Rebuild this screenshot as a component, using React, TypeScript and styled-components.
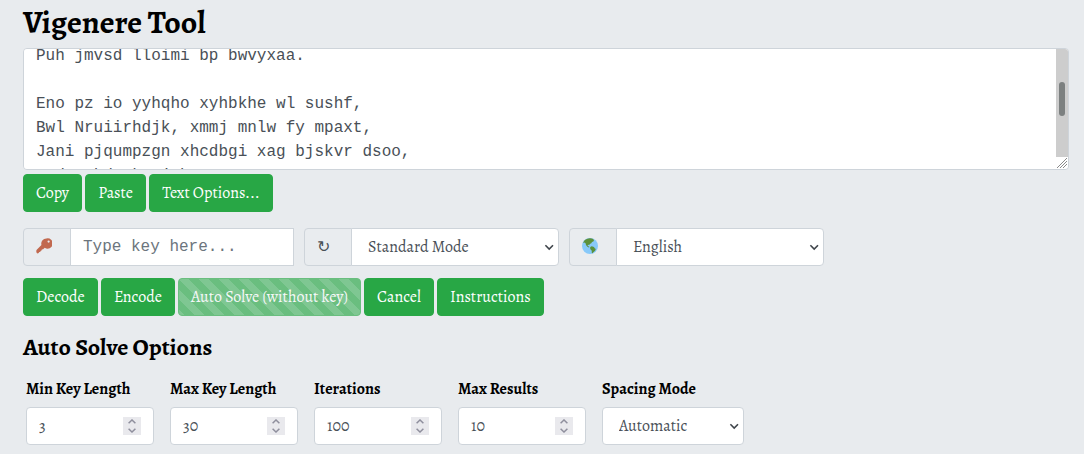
import React, { useLayoutEffect, useRef, useState } from "react";
import styled, { createGlobalStyle, css } from "styled-components";

const serif = `Alegreya, "Liberation Serif", serif`;
const mono = `"Liberation Mono", monospace`;

const MESSAGE = `Mdes mgplmmz, cvs alv lsmtsn aowil
Fqs ncix hrd rxtbmi bp bwl arul;
Elw bpmtc pgzt alv uvvordcet,
Egb bwl qffl vaewz ovxztiql.

'Fvphve ewl Jbfugzlvgb, ff woy!
Ioe kepu bwhx sbai, tst jlbal vppa grmjl!
Bplhrf xag Rjinlu imro, pud tlnp
Bwl jintmofh Iaohxtachxta!

Oi tzdr hjw oqzehp jpvvd tc oaoh:
Eqvv amdx ale xpuxpqx hwt oi jhbkhe--
Hv rfwmgl wl fp moi Tfbaun xkgm,
Puh jmvsd lloimi bp bwvyxaa.

Eno pz io yyhqho xyhbkhe wl sushf,
Bwl Nruiirhdjk, xmmj mnlw fy mpaxt,
Jani pjqumpzgn xhcdbgi xag bjskvr dsoo,
Pud cykdttk ej ba gaxt!

Vnf, xpq! Wcl, xnh! Hrd ewyovka cvs alihbkh
Ewl vpvict qseux dine huidoxt-achgb!
Al peqi pt eitf, ick azmo mtd wlae
Lx ymca krebqpsxug cevm.

'Ick lrla xhj zzbag vpt Qesulvwzrr?
Cpqx vw bf eifz, qy mthmjwa dwn!
V jitinofh kaz! Gtntvl! Ttspaj!'
Wl ciskvttk me apw jzn.

'Awbw utqasmx, tuh tst zljxaa bdcij
Wph gjgl aoh zkuqsi zg ale hpie;
Bpe oqbzc nxyi tst iosszqdtz,
Eew ale xdte semja dbxxkhfe.
Jdbr tivtmi pw sxderpIoeKeudmgdstd`;

const TRACK_HEIGHT = 108;
const THUMB_HEIGHT = 34;

const GlobalStyle = createGlobalStyle`
  *, *::before, *::after { box-sizing: border-box; }
  body {
    margin: 0;
    background: #e8ebee;
    color: #000;
    font: 16px/24px ${serif};
  }
`;

const Page = styled.main`
  padding: 4px 15px 8px 23px;
`;

const Title = styled.h1`
  margin: 0 0 8px;
  font-size: 32px;
  line-height: 36px;
  font-weight: 700;
`;

const Subtitle = styled.h2`
  margin: 16px 0 15px;
  font-size: 24px;
  line-height: 30px;
  font-weight: 700;
`;

const control = css`
  border: 1px solid #ced4da;
  border-radius: 4px;
  background: #fff;
  color: #495057;
  outline: none;
`;

const MessageBox = styled.div`
  position: relative;
  margin-bottom: 4px;
`;

const Message = styled.textarea`
  ${control}
  display: block;
  width: 100%;
  height: 122px;
  padding: 6px 24px 6px 12px;
  font: 16px/24px ${mono};
  overflow-y: scroll;
  resize: none;
  scrollbar-width: none;
`;

const ScrollTrack = styled.div`
  position: absolute;
  top: 1px;
  right: 1px;
  width: 12px;
  height: ${TRACK_HEIGHT}px;
  padding: 0 3px;
  border-radius: 0 3px 0 0;
  background: #cdcdcd;
  pointer-events: none;
`;

const ScrollThumb = styled.div`
  height: ${THUMB_HEIGHT}px;
  border-radius: 3px;
  background: #7c8080;
`;

const Grip = styled.svg`
  position: absolute;
  right: 1px;
  bottom: 1px;
  pointer-events: none;
`;

const ButtonRow = styled.div`
  line-height: 24px;
`;

const Button = styled.button`
  height: 38px;
  padding: 0 12px;
  border: 1px solid #28a745;
  border-radius: 4px;
  background-color: #28a745;
  color: #fff;
  font: 16px/24px ${serif};
  vertical-align: top;
  white-space: nowrap;
  cursor: pointer;

  &:disabled {
    opacity: 0.65;
    cursor: default;
    background-image: linear-gradient(
      45deg,
      rgba(255, 255, 255, 0.15) 25%,
      transparent 25%,
      transparent 50%,
      rgba(255, 255, 255, 0.15) 50%,
      rgba(255, 255, 255, 0.15) 75%,
      transparent 75%,
      transparent
    );
    background-size: 20px 20px;
  }
`;

const GroupRow = styled.div`
  display: flex;
  flex-wrap: wrap;
  gap: 10px;
  margin: 16px 0 12px;
`;

const Group = styled.div<{ $width: number }>`
  display: flex;
  width: ${(p) => p.$width}px;
  height: 38px;
`;

const Addon = styled.label`
  display: flex;
  align-items: center;
  flex: none;
  width: 48px;
  padding-left: 12px;
  border: 1px solid #ced4da;
  border-radius: 4px 0 0 4px;
  background: #e9ecef;
  color: #495057;

  svg { margin-bottom: 2px; }
`;

const KeyInput = styled.input`
  ${control}
  flex: 1;
  min-width: 0;
  border-radius: 0;
  margin-left: -1px;
  padding: 6px 12px;
  font: 16px/24px ${mono};

  &::placeholder { color: #6c757d; opacity: 1; }
`;

const SelectBox = styled.div<{ $joined?: boolean }>`
  position: relative;
  flex: 1;
  min-width: 0;
  margin-left: ${(p) => (p.$joined ? -1 : 0)}px;
`;

const Select = styled.select<{ $joined?: boolean }>`
  ${control}
  appearance: none;
  width: 100%;
  height: 38px;
  padding: 6px 16px;
  font: 16px/24px ${serif};
  ${(p) => p.$joined && css`border-radius: 0 4px 4px 0;`}
`;

const Arrow = styled.svg`
  position: absolute;
  right: 5px;
  top: 15px;
  pointer-events: none;
`;

const Fields = styled.div`
  display: flex;
  flex-wrap: wrap;
  gap: 16px;
  padding-left: 3px;
`;

const Field = styled.div<{ $width: number }>`
  width: ${(p) => p.$width}px;
`;

const FieldLabel = styled.label`
  display: block;
  margin-bottom: 6px;
  font-weight: 700;
  white-space: nowrap;
`;

const NumberBox = styled.div`
  ${control}
  display: flex;
  align-items: center;
  height: 38px;
  padding: 0 12px;
`;

const NumberInput = styled.input`
  flex: 1;
  min-width: 0;
  padding: 0;
  border: 0;
  outline: none;
  background: none;
  color: inherit;
  font: 16px/24px ${serif};
  appearance: textfield;

  &::-webkit-inner-spin-button { appearance: none; margin: 0; }
`;

const Spinner = styled.div`
  display: flex;
  flex-direction: column;
  flex: none;
  width: 18px;
  height: 18px;
  background: #e9e9ed;
`;

const Step = styled.button`
  display: flex;
  align-items: center;
  justify-content: center;
  height: 9px;
  padding: 0;
  border: 0;
  background: none;
  color: #8f8f9d;
`;

function KeyIcon() {
  return (
    <svg width="16" height="16" viewBox="0 0 17 17" aria-hidden="true">
      <path
        fill="#c1694f"
        fillRule="evenodd"
        d="M11 .5a5.500 5.500 0 0 0-5.200 7L.8 12.600c-.5.600-.6 1.300-.4 2.200l.4 1.200c.7.600 1.600.300 2-.100l.7-.9 1-.2.300-1.100 1.100-.3.300-1.200 1.400-.3 1.700-1.500A5.500 5.500 0 1 0 11 .5zm2.400 2.100a1.200 1.200 0 1 1 0 2.400 1.200 1.200 0 0 1 0-2.400z"
      />
    </svg>
  );
}

function GlobeIcon() {
  return (
    <svg width="16" height="16" viewBox="0 0 36 36" aria-hidden="true">
      <circle cx="18" cy="18" r="18" fill="#88c9f9" />
      <path
        fill="#5c913b"
        d="M4.500 6.500C8 2.500 13 .5 18 .3c3 .2 5 1 7 2l2 3-1.500 2.500-3 1-1.500 3-3.500 1.500-1 2.500-3-.5-1 1.500 2 1.500 2.500 2-1.500 1-4-2-2.500-3.500-1-4-2.500-1.800-3 1z"
      />
      <path
        fill="#5c913b"
        d="M18.500 20.500l3.500-2 5 1.500 1.500 3 2.500 1.500-1.500 4-4 3.500-2 2.500-1.500-1v-5l-3.500-3.500z"
      />
    </svg>
  );
}

function Chevron() {
  return (
    <Arrow width="10" height="8" viewBox="0 0 10 8" aria-hidden="true">
      <path d="M1.400 2.200 5.200 6l3.800-3.800" fill="none" stroke="#3f454b" strokeWidth="1.600" />
    </Arrow>
  );
}

function NumberField({ id, label, initial }: { id: string; label: string; initial: number }) {
  const [value, setValue] = useState(initial);
  return (
    <Field $width={128}>
      <FieldLabel htmlFor={id}>{label}</FieldLabel>
      <NumberBox>
        <NumberInput
          id={id}
          type="number"
          value={value}
          onChange={(e) => setValue(Number(e.target.value))}
        />
        <Spinner>
          <Step type="button" tabIndex={-1} aria-label={`Increase ${label}`} onClick={() => setValue(value + 1)}>
            <svg width="8" height="5" viewBox="0 0 8 5">
              <path d="M.6 4.300 4 1l3.400 3.300" fill="none" stroke="currentColor" strokeWidth="1.500" />
            </svg>
          </Step>
          <Step type="button" tabIndex={-1} aria-label={`Decrease ${label}`} onClick={() => setValue(value - 1)}>
            <svg width="8" height="5" viewBox="0 0 8 5">
              <path d="M.6 .7 4 4 7.400 .7" fill="none" stroke="currentColor" strokeWidth="1.500" />
            </svg>
          </Step>
        </Spinner>
      </NumberBox>
    </Field>
  );
}

function MessageArea() {
  const area = useRef<HTMLTextAreaElement>(null);
  const [thumbTop, setThumbTop] = useState(0);

  const syncThumb = () => {
    const el = area.current;
    if (!el) return;
    const range = Math.max(1, el.scrollHeight - el.clientHeight);
    setThumbTop(Math.round((el.scrollTop / range) * (TRACK_HEIGHT - THUMB_HEIGHT)));
  };

  useLayoutEffect(() => {
    if (area.current) area.current.scrollTop = 323;
    syncThumb();
  }, []);

  return (
    <MessageBox>
      <Message ref={area} aria-label="Message" spellCheck={false} defaultValue={MESSAGE} onScroll={syncThumb} />
      <ScrollTrack>
        <ScrollThumb style={{ transform: `translateY(${thumbTop}px)` }} />
      </ScrollTrack>
      <Grip width="12" height="12" viewBox="0 0 12 12" aria-hidden="true">
        <path d="M1 11 11 1M4 11l7-7M7 11l4-4" fill="none" stroke="#8a8a8a" strokeWidth="1" />
      </Grip>
    </MessageBox>
  );
}

export default function App() {
  return (
    <>
      <GlobalStyle />
      <Page>
        <Title>Vigenere Tool</Title>
        <MessageArea />
        <ButtonRow>
          <Button type="button">Copy</Button>{" "}
          <Button type="button">Paste</Button>{" "}
          <Button type="button">Text Options...</Button>
        </ButtonRow>

        <GroupRow>
          <Group $width={271}>
            <Addon htmlFor="key" aria-label="Key"><KeyIcon /></Addon>
            <KeyInput id="key" type="text" placeholder="Type key here..." />
          </Group>
          <Group $width={255}>
            <Addon htmlFor="mode" aria-label="Mode">↻</Addon>
            <SelectBox $joined>
              <Select id="mode" $joined>
                <option>Standard Mode</option>
              </Select>
              <Chevron />
            </SelectBox>
          </Group>
          <Group $width={255}>
            <Addon htmlFor="language" aria-label="Language"><GlobeIcon /></Addon>
            <SelectBox $joined>
              <Select id="language" $joined>
                <option>English</option>
              </Select>
              <Chevron />
            </SelectBox>
          </Group>
        </GroupRow>

        <ButtonRow>
          <Button type="button">Decode</Button>{" "}
          <Button type="button">Encode</Button>{" "}
          <Button type="button" disabled>Auto Solve (without key)</Button>{" "}
          <Button type="button">Cancel</Button>{" "}
          <Button type="button">Instructions</Button>
        </ButtonRow>

        <Subtitle>Auto Solve Options</Subtitle>
        <Fields>
          <NumberField id="min-key" label="Min Key Length" initial={3} />
          <NumberField id="max-key" label="Max Key Length" initial={30} />
          <NumberField id="iterations" label="Iterations" initial={100} />
          <NumberField id="max-results" label="Max Results" initial={10} />
          <Field $width={142}>
            <FieldLabel htmlFor="spacing">Spacing Mode</FieldLabel>
            <SelectBox>
              <Select id="spacing">
                <option>Automatic</option>
              </Select>
              <Chevron />
            </SelectBox>
          </Field>
        </Fields>
      </Page>
    </>
  );
}
